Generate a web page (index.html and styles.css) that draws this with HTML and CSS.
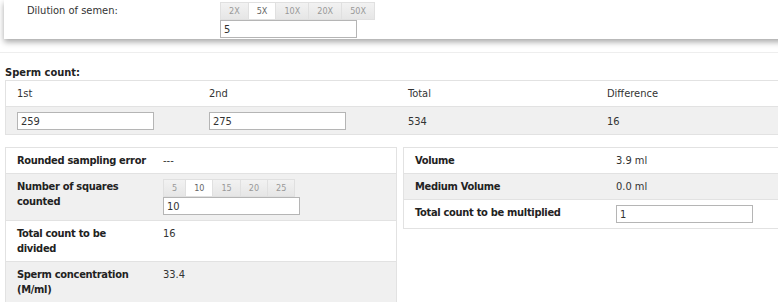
FILE: index.html
```html
<!DOCTYPE html>
<html lang="en">
<head>
    <meta charset="UTF-8">
    <title>Sperm count</title>
    <link rel="stylesheet" href="styles.css">
</head>
<body>
<div class="dilution-card">
    <div class="dilution-label">Dilution of semen:</div>
    <div class="picker">
        <div class="btn-group">
            <span class="opt">2X</span>
            <span class="opt active">5X</span>
            <span class="opt">10X</span>
            <span class="opt">20X</span>
            <span class="opt">50X</span>
        </div>
        <input type="text" class="field" value="5">
    </div>
</div>

<div class="section">
    <div class="section-title">Sperm count:</div>
    <table class="grid count-table">
        <tr>
            <td class="c1">1st</td>
            <td class="c2">2nd</td>
            <td class="c3">Total</td>
            <td>Difference</td>
        </tr>
        <tr class="alt">
            <td><input type="text" class="field" value="259"></td>
            <td><input type="text" class="field" value="275"></td>
            <td>534</td>
            <td>16</td>
        </tr>
    </table>

    <div class="results">
        <table class="grid left-table">
            <tr>
                <th>Rounded sampling error</th>
                <td>---</td>
            </tr>
            <tr class="alt">
                <th>Number of squares counted</th>
                <td>
                    <div class="btn-group">
                        <span class="opt">5</span>
                        <span class="opt active">10</span>
                        <span class="opt">15</span>
                        <span class="opt">20</span>
                        <span class="opt">25</span>
                    </div>
                    <input type="text" class="field block" value="10">
                </td>
            </tr>
            <tr>
                <th>Total count to be divided</th>
                <td>16</td>
            </tr>
            <tr class="alt">
                <th>Sperm concentration (M/ml)</th>
                <td>33.4</td>
            </tr>
        </table>

        <table class="grid right-table">
            <tr>
                <th>Volume</th>
                <td>3.9 ml</td>
            </tr>
            <tr class="alt">
                <th>Medium Volume</th>
                <td>0.0 ml</td>
            </tr>
            <tr>
                <th>Total count to be multiplied</th>
                <td><input type="text" class="field" value="1"></td>
            </tr>
        </table>
    </div>
</div>
</body>
</html>
```

FILE: styles.css
```css
body {
    font-family: "DejaVu Sans Condensed", "DejaVu Sans", Verdana, sans-serif;
    font-stretch: condensed;
    font-size: 11px;
    line-height: 15px;
    color: #333;
    background: white;
    margin: 0;
    overflow: hidden;
}

.dilution-card {
    display: flex;
    margin-left: 4px;
    width: 820px;
    padding: 2px 0 1px;
    background: white;
    box-shadow: 0 3px 6px rgba(0, 0, 0, 0.35);
}
.dilution-label {
    width: 193px;
    padding: 1px 0 0 23px;
}
.picker {
    display: flex;
    flex-direction: column;
}

.btn-group {
    display: flex;
}
.opt {
    height: 16px;
    line-height: 16px;
    padding: 0 8px;
    font-size: 9px;
    color: #999;
    background: linear-gradient(#f2f2f2, #e6e6e6);
    border: 1px solid #e0e0e0;
    border-right: none;
}
.opt:last-child {
    border-right: 1px solid #e0e0e0;
}
.opt.active {
    background: white;
    color: #666;
}

.field {
    width: 137px;
    height: 18px;
    box-sizing: border-box;
    margin: 0;
    padding: 0 3px;
    border: 1px solid #b5b5b5;
    font-family: inherit;
    font-size: 11px;
    color: #333;
    background: white;
}
.field.block {
    display: block;
}

.section {
    margin-top: 13px;
    border-top: 1px solid #eee;
    padding: 12px 0 0 5px;
}
.section-title {
    font-weight: bold;
    color: #222;
}

.grid {
    border-collapse: collapse;
    border: 1px solid #e2e2e2;
    table-layout: fixed;
}
.grid td,
.grid th {
    border-top: 1px solid #e2e2e2;
    padding: 5px 11px;
    text-align: left;
    vertical-align: top;
}
.grid th {
    font-weight: bold;
    letter-spacing: -0.3px;
    color: #222;
}
.grid tr.alt {
    background: #f0f0f0;
}

.count-table {
    width: 820px;
}
.count-table tr.alt td {
    padding: 5px 11px 4px;
    vertical-align: middle;
}
.count-table .c1 { width: 170px; }
.count-table .c2 { width: 177px; }
.count-table .c3 { width: 177px; }

.results {
    display: flex;
    gap: 6px;
    margin-top: 12px;
    align-items: flex-start;
}
.left-table {
    flex: none;
    width: 392px;
}
.left-table th {
    width: 130px;
    padding-right: 5px;
}
.right-table {
    flex: none;
    width: 420px;
}
.right-table th {
    width: 179px;
}
.right-table td {
    vertical-align: middle;
}
```
